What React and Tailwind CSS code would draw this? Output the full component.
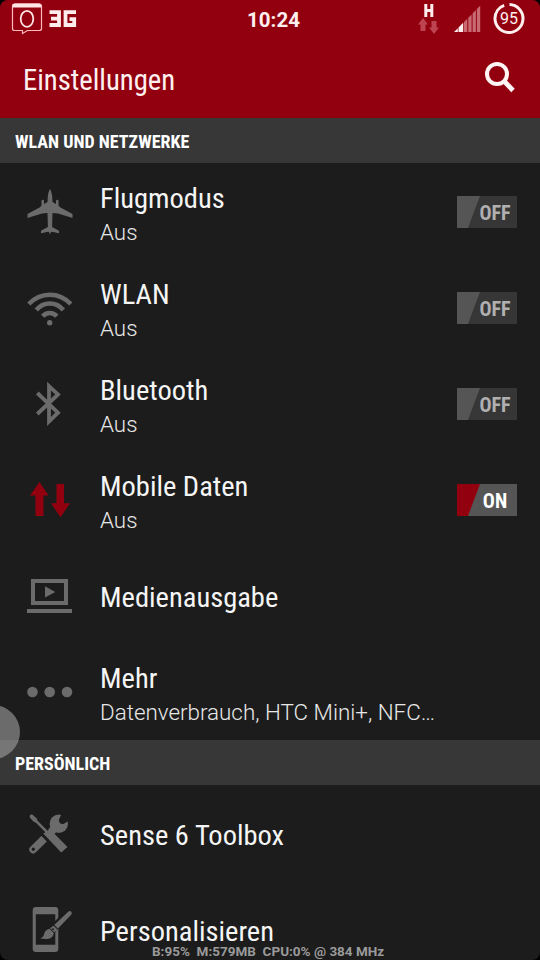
import React from "react";

const cond = "font-['Roboto_Condensed','Roboto',sans-serif] [font-stretch:75%]";
const GREY = "#6b6b6b";

function Plane() {
  return (
    <svg width="46" height="46" viewBox="0 0 46 46" fill={GREY}>
      <path d="M23 0c1.200 2 1.900 4.500 2.200 7.500l.3 5.500L29 15V12q0-1.200 1.300-1.200T31.500 12v4.500l1.500 1.800L45.500 25v4L40 27.200l-9-2.700-5.500-.4-.4 13.800L32 41.800v2.500l-7-1.500-1 .2-1 2.500-1-2.500-1-.2-7 1.500v-2.500l6.900-3.900-.4-13.800-5.500.4-9 2.700L.5 29v-4L13 18.300l1.500-1.800V12q0-1.200 1.200-1.200T17 12v3l3.500-2 .3-5.500C21.100 4.500 21.800 2 23 0z" />
    </svg>
  );
}

function Wifi() {
  return (
    <svg width="46" height="46" viewBox="0 0 46 46" fill="none" stroke={GREY} strokeWidth="4.500">
      <path d="M1.800 19C13.500 6.600 32 6.600 43.800 19M9.300 25C16.300 16.300 29.300 16.300 36.300 25M15.700 31.300C19.500 26.800 26 26.800 29.800 31.300" />
      <circle cx="22.700" cy="37.700" r="2.700" fill={GREY} stroke="none" />
    </svg>
  );
}

function Bluetooth() {
  return (
    <svg width="46" height="46" viewBox="0 0 46 46" fill="none" stroke={GREY} strokeWidth="3.800">
      <path d="M10.300 12 31 31.700 22 40.500V5L31 13.400 10.300 33" strokeMiterlimit="8" />
    </svg>
  );
}

function MobileData() {
  return (
    <svg width="46" height="46" viewBox="0 0 46 46" fill="#92000f">
      <path d="M12.500 5 21.500 18.500H16.500V39H8.500V18.500H3z M29.500 7h7.500v19.200h6L33.500 40.300 24 26.200h5.500z" />
    </svg>
  );
}

function Media() {
  return (
    <svg width="46" height="46" viewBox="0 0 46 46" fill={GREY}>
      <path fillRule="evenodd" d="M4 6h37v26H4zM8 10v18h29V10z" />
      <path d="M18 13.300 28.300 19 18 24.500zM0 36h45v4H0z" />
    </svg>
  );
}

function Dots() {
  return (
    <svg width="46" height="46" viewBox="0 0 46 46" fill={GREY}>
      <circle cx="5.500" cy="23" r="5.300" />
      <circle cx="22.700" cy="23" r="5.300" />
      <circle cx="40" cy="23" r="5.300" />
    </svg>
  );
}

function Tools() {
  return (
    <svg width="46" height="46" viewBox="0 0 46 46">
      <path d="M6.200 38.500 26 19" stroke={GREY} strokeWidth="7.800" strokeLinecap="round" />
      <circle cx="31.800" cy="12.800" r="9.200" fill={GREY} />
      <path d="M34.500 3 32 8.500q-.6 2 .9 3.400 1.500 1.600 3.600 1L42 9.500 42 1z" fill="#1c1c1c" />
      <circle cx="6.300" cy="38.200" r="1.600" fill="#1c1c1c" />
      <path d="M15.500 19 30 34.500" stroke="#1c1c1c" strokeWidth="9.500" />
      <path d="M7 8 20 21" stroke={GREY} strokeWidth="2.500" />
      <path d="M3 4 5 3.300 9.800 7.500 10.800 11.700 7 11 2.700 6.500z" fill={GREY} />
      <path d="M16.300 22.500Q20.500 20.500 22.500 17.700L40.500 36 34.200 41.500z" fill={GREY} />
    </svg>
  );
}

function Brush() {
  return (
    <svg width="46" height="46" viewBox="0 0 46 46">
      <path fillRule="evenodd" fill={GREY} d="M9 0h19q3.300 0 3.300 3v39q0 3-3.300 3H9q-3.300 0-3.300-3V3q0-3 3.300-3zM8.800 7.300v30.500h19.500V7.300z" />
      <path d="M43 4.500 23 24.500" stroke="#1c1c1c" strokeWidth="7.500" />
      <path d="M41.200 4.700q1.600-1.400 3 0t0 3L31 21.500 27.200 18z" fill={GREY} />
      <path d="M26.500 18.700 30.300 22.300 27.300 25.200 23 21.200z" fill={GREY} />
      <circle cx="26" cy="22.300" r="1" fill="#1c1c1c" />
      <path d="M22.400 21.800 26.800 26q-.5 4.500-5 5.700-4 .9-8.800-.4 3.500-1 4-4 1-4.200 5.400-5.500z" fill={GREY} />
    </svg>
  );
}

function Toggle({ on }) {
  return (
    <div className={`flex h-8 w-[60px] shrink-0 items-center ${on ? "bg-[#555555]" : "bg-[#363636]"}`}>
      <div className={`h-8 w-[23px] shrink-0 [clip-path:polygon(0_0,100%_0,48%_100%,0_100%)] ${on ? "bg-[#92000f]" : "bg-[#555555]"}`} />
      <span className={`${cond} -ml-[3px] w-[36px] pt-[2px] text-center text-[20px] leading-8 font-bold ${on ? "text-white" : "text-[#b0b0b0]"}`}>
        {on ? "ON" : "OFF"}
      </span>
    </div>
  );
}

function Row({ icon, title, sub, toggle }) {
  return (
    <div className="flex h-24 shrink-0 items-center pr-[23px] pl-[27px]">
      <div className="w-[73px] shrink-0">{icon}</div>
      <div className={`flex min-w-0 flex-1 flex-col ${sub ? "pt-[6px]" : "pt-[3px]"}`}>
        <div className={`${cond} text-[28.5px] leading-[34px] whitespace-nowrap text-[#f5f5f5]`}>{title}</div>
        {sub && <div className="font-['Roboto',sans-serif] text-[22.4px] leading-[33px] font-light whitespace-nowrap text-[#e8e8e8]">{sub}</div>}
      </div>
      {toggle && <Toggle on={toggle === "on"} />}
    </div>
  );
}

function Section({ children }) {
  return (
    <div className={`${cond} flex h-[45px] shrink-0 items-center bg-[#373737] pt-[2px] pl-[15px] text-[18px] font-bold text-white`}>
      {children}
    </div>
  );
}

function StatusBar() {
  return (
    <div className="flex h-[38px] items-center justify-between">
      <div className="flex w-[200px] items-start gap-[6px] pl-[11px]">
        <svg width="32" height="32" viewBox="0 0 32 32" fill="none">
          <path d="M3.500 1h25q2 0 2 2v22.500q0 2-2 2H16.500L11.500 30.500v-3h-8q-2 0-2-2V3q0-2 2-2z" stroke="#ffb9be" strokeWidth="1.200" />
          <path d="M1.500 4.500q0-4 3-4h23q3 0 3 4z" fill="#ffe4e6" />
          <ellipse cx="16" cy="15.800" rx="6.300" ry="8" stroke="#ffe4e6" strokeWidth="1.800" />
        </svg>
        <svg width="28" height="18" viewBox="0 0 28 18" className="mt-[7px]" fill="none" stroke="#ffecec" strokeWidth="3.800">
          <path d="M0.500 2.200H10V15H0.500M2 8.600H10M27 2.200H16.500V15H25.200V9.200H20.500" />
        </svg>
      </div>
      <div className="w-[140px] pt-[2px] pl-[7px] text-center font-['Roboto',sans-serif] text-[20.5px] font-bold text-[#fff0f0]">10:24</div>
      <div className="flex w-[200px] items-center justify-end gap-[12px] pr-[15px]">
        <svg width="24" height="32" viewBox="0 0 24 32" fill="none">
          <path d="M8.800 1v13M14.800 1v13M8.800 7.500h6" stroke="#ffecec" strokeWidth="3" />
          <path d="M6 15 11 21.500H8.500V28h-5v-6.500H1zM14.500 18h5v6.500H22L17 31l-5-6.500h2.500z" fill="#bd4450" />
        </svg>
        <svg width="28" height="32" viewBox="0 0 28 32">
          <path d="M1 29 4.800 25.200V29zM5.500 24.500l4.700-4.700V29H5.500z" fill="#fff0f0" />
          <path d="M11 19l3.300-3.300V29H11zM15.300 14.700l3.300-3.300V29h-3.300zM19.600 10.400l3.300-3.300V29h-3.300zM23.900 6.100 27.200 2.800V29h-3.300z" fill="#c96a72" />
        </svg>
        <svg width="32" height="32" viewBox="0 0 32 32">
          <circle cx="16" cy="15.500" r="14" fill="none" stroke="#fff0f0" strokeWidth="3" strokeDasharray="82 6" transform="rotate(-88 16 15.500)" />
          <text x="16" y="21.300" textAnchor="middle" fontFamily="Roboto" fontSize="16" fill="#fff0f0">95</text>
        </svg>
      </div>
    </div>
  );
}

export default function App() {
  return (
    <div className="bg-black">
      <div className="relative flex h-[960px] w-[540px] flex-col overflow-hidden rounded-[8px] bg-[#1c1c1c]">
        <header className="flex h-[118px] shrink-0 flex-col bg-[#92000f]">
          <StatusBar />
          <div className="flex h-20 items-center justify-between pr-[24px] pl-[23px]">
            <h1 className={`${cond} pt-[5px] text-[28.7px] text-[#fff0f0]`}>Einstellungen</h1>
            <svg width="32" height="32" viewBox="0 0 32 32" fill="none" stroke="#fff5f5" strokeWidth="4">
              <circle cx="13" cy="12" r="10" />
              <path d="M20 19 29 28.500" strokeWidth="4.800" />
            </svg>
          </div>
        </header>
        <Section>WLAN UND NETZWERKE</Section>
        <div className="flex h-[577px] shrink-0 flex-col pt-px">
          <Row icon={<Plane />} title="Flugmodus" sub="Aus" toggle="off" />
          <Row icon={<Wifi />} title="WLAN" sub="Aus" toggle="off" />
          <Row icon={<Bluetooth />} title="Bluetooth" sub="Aus" toggle="off" />
          <Row icon={<MobileData />} title="Mobile Daten" sub="Aus" toggle="on" />
          <Row icon={<Media />} title="Medienausgabe" />
          <Row icon={<Dots />} title="Mehr" sub="Datenverbrauch, HTC Mini+, NFC…" />
        </div>
        <Section>PERSÖNLICH</Section>
        <div className="flex shrink-0 flex-col pt-px">
          <Row icon={<Tools />} title="Sense 6 Toolbox" />
          <Row icon={<Brush />} title="Personalisieren" />
        </div>
        <div className="absolute top-[705px] -left-[34px] h-[54px] w-[54px] rounded-full bg-[#a0a0a0]/60" />
        <div className="absolute top-[943px] left-[152px] font-['Roboto',sans-serif] text-[13.5px] leading-4 font-bold whitespace-pre text-[#9a9a9a]">
          {"B:95%  M:579MB  CPU:0% @ 384 MHz"}
        </div>
      </div>
    </div>
  );
}
